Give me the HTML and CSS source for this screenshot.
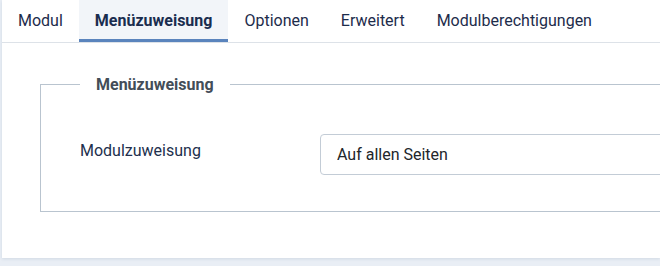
FILE: index.html
```
<!DOCTYPE html>
<html lang="de">
<head>
  <meta charset="UTF-8">
  <title>Modul bearbeiten</title>
  <link rel="stylesheet" href="styles.css">
</head>
<body>

<div class="card">

  <!-- Tabs -->
  <div class="tabs">
    <div class="tab">Modul</div>
    <div class="tab active">Menüzuweisung</div>
    <div class="tab">Optionen</div>
    <div class="tab">Erweitert</div>
    <div class="tab">Modulberechtigungen</div>
  </div>

  <!-- Menu assignment -->
  <div class="card-body">
    <fieldset class="options">
      <legend>Menüzuweisung</legend>
      <div class="row">
        <label for="assignment">Modulzuweisung</label>
        <select id="assignment" class="form-select">
          <option>Auf allen Seiten</option>
          <option>Auf keinen Seiten</option>
          <option>Nur auf den gewählten Seiten</option>
          <option>Auf allen, außer den gewählten Seiten</option>
        </select>
      </div>
    </fieldset>
  </div>

</div>

</body>
</html>
```

FILE: styles.css
```
html, body {
  margin: 0;
  padding: 0;
}
body {
  font-family: Roboto, "Liberation Sans", sans-serif;
  font-size: 16px;
  background: #e9eef5;
  width: 660px;
  height: 266px;
  overflow: hidden;
}
.card {
  margin-left: 2px;
  width: 658px;
  height: 258px;
  overflow: hidden;
  background: #ffffff;
  box-shadow: 0 1px 3px rgba(40, 70, 110, 0.12);
}
.tabs {
  display: flex;
  border-bottom: 1px solid #dde2e8;
}
.tab {
  height: 39px;
  line-height: 42px;
  padding: 0 16px;
  border-bottom: 3px solid transparent;
  color: #1d2c4b;
  white-space: nowrap;
}
.tab.active {
  background: #f2f5f9;
  border-bottom-color: #5a84bd;
  font-weight: bold;
  color: #1a2d4f;
}
.card-body {
  padding: 32px 0 0 38px;
}
.options {
  margin: 0;
  padding: 0 0 36px 39px;
  border: 1px solid #b9c4cf;
  border-right: none;
}
.options legend {
  padding: 0 16px;
  font-weight: bold;
  color: #434d58;
}
.row {
  display: flex;
  align-items: flex-start;
  margin-top: 40px;
}
.row label {
  flex: none;
  width: 240px;
  padding-top: 5px;
  line-height: 24px;
  color: #22304d;
}
.form-select {
  flex: none;
  appearance: none;
  width: 420px;
  height: 41px;
  padding: 0 16px;
  font-family: Roboto, "Liberation Sans", sans-serif;
  font-size: 16px;
  color: #22262a;
  background: #ffffff;
  border: 1px solid #c3ccd6;
  border-radius: 4px;
}
```
